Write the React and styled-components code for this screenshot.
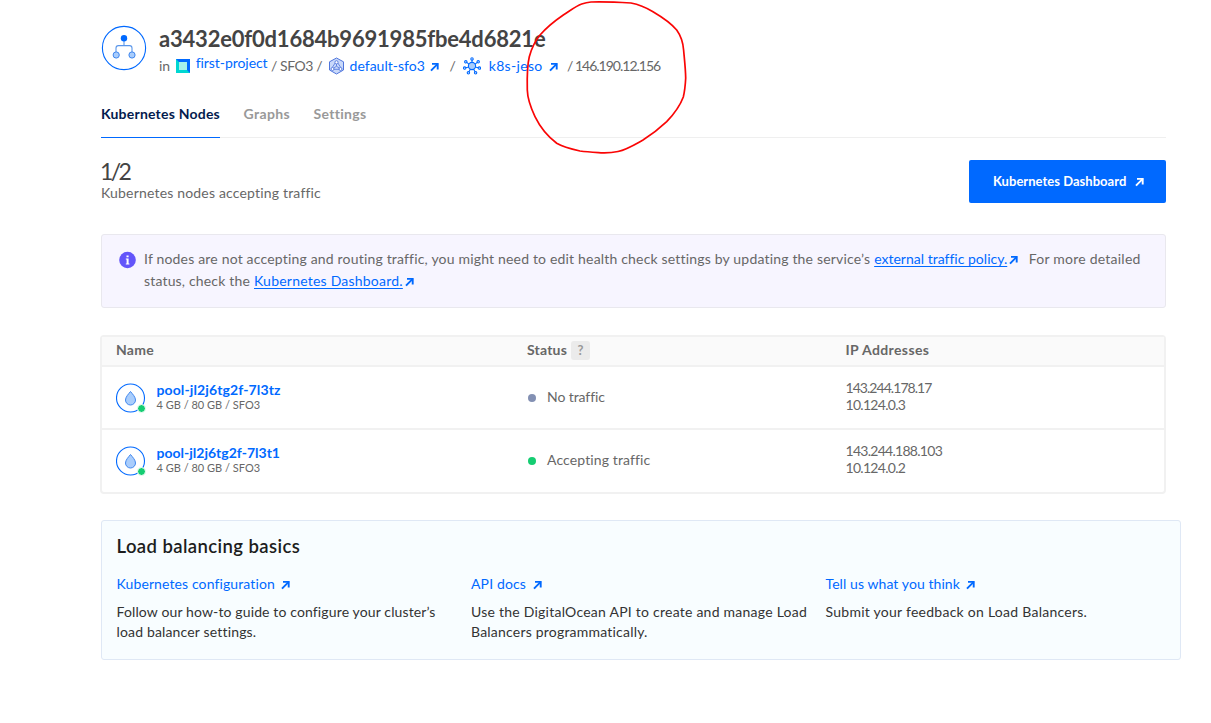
import React from "react";
import styled, { createGlobalStyle } from "styled-components";

const GlobalStyle = createGlobalStyle`
  * { box-sizing: border-box; }
  body {
    margin: 0;
    background: #fff;
    color: #676767;
    font: 400 14px/20px Lato, "Open Sans", sans-serif;
  }
  h1, h2, p { margin: 0; font-weight: inherit; }
  svg { display: block; flex: none; }
`;

const Page = styled.main`
  position: relative;
  width: 1211px;
  height: 723px;
  overflow: hidden;
  padding: 24px 30px 0 101px;
`;

const Content = styled.div`
  width: 1065px;
`;

const T = styled.span`
  letter-spacing: ${(p) => p.$ls || 0}px;
  white-space: nowrap;
`;

const Header = styled.header`
  display: flex;
  height: 68px;
`;

const Avatar = styled.div`
  width: 46px;
  padding: 1px 0 0 0;
  margin-right: 12px;
`;

const Title = styled.h1`
  color: #444;
  font-size: 22px;
  font-weight: 700;
  line-height: 30px;
  letter-spacing: -0.2px;
`;

const Crumbs = styled.div`
  display: flex;
  align-items: center;
  height: 24px;
`;

const CrumbItem = styled.div`
  display: flex;
  align-items: center;
  margin-left: ${(p) => p.$gap || 0}px;
`;

const CrumbLink = styled.a`
  color: #0069ff;
  letter-spacing: ${(p) => p.$ls || 0}px;
  margin: 0 ${(p) => p.$after || 0}px ${(p) => p.$lift || 0}px ${(p) => p.$before || 0}px;
  white-space: nowrap;
`;

const Tabs = styled.nav`
  display: flex;
  height: 46px;
  border-bottom: 1px solid #efefef;
`;

const Tab = styled.a`
  height: 46px;
  width: ${(p) => p.$w}px;
  margin-right: 23.5px;
  padding-top: 12px;
  color: ${(p) => (p.$active ? "#031b4e" : "#999")};
  border-bottom: 1px solid ${(p) => (p.$active ? "#0069ff" : "transparent")};
  font-weight: 700;
  letter-spacing: ${(p) => p.$ls}px;
  white-space: nowrap;
`;

const Summary = styled.section`
  display: flex;
  justify-content: space-between;
  height: 96px;
  padding-top: 22px;
`;

const Count = styled.div`
  margin: -1px 0 0 -1px;
  color: #444;
  font-size: 24px;
  line-height: 24px;
  letter-spacing: -2.7px;
  transform: scaleX(0.96);
  transform-origin: left;
`;

const DashboardButton = styled.a`
  display: flex;
  align-items: center;
  width: 197px;
  height: 43px;
  padding: 0 0 1px 24px;
  gap: 9px;
  border-radius: 2px;
  background: #0069ff;
  color: #fff;
  font-size: 13px;
  font-weight: 700;
`;

const Notice = styled.section`
  display: flex;
  height: 74px;
  padding: 13px 0 0 16.5px;
  border: 1px solid #e9e8ee;
  border-radius: 3px;
  background: #f7f5ff;
`;

const NoticeText = styled.div`
  margin-left: 8.5px;
`;

const NoticeLine = styled.div`
  display: flex;
  align-items: center;
  height: 22px;
`;

const NoticeLink = styled.a`
  margin: 0 ${(p) => p.$after || 2}px 0 4px;
  color: #0069ff;
  letter-spacing: ${(p) => p.$ls}px;
  text-decoration: underline;
  text-underline-offset: 2px;
  white-space: nowrap;
`;

const Table = styled.section`
  width: 1066px;
  height: 159px;
  margin: 27px 0 0 -1px;
  border: 2px solid #f1f1f1;
  border-radius: 4px;
`;

const Row = styled.div`
  display: grid;
  grid-template-columns: 411px 318.5px 1fr;
  align-items: center;
  height: ${(p) => p.$h}px;
  padding-left: 14px;
  border-bottom: ${(p) => (p.$last ? 0 : 2)}px solid #f1f1f1;
`;

const HeadRow = styled(Row)`
  background: #fafafa;
  font-weight: 700;
  padding-bottom: 2px;
`;

const Cell = styled.div`
  display: flex;
  align-items: center;
  margin-top: ${(p) => p.$up || 0}px;
`;

const Help = styled.span`
  width: 19px;
  height: 19px;
  margin: 2px 0 0 4px;
  border-radius: 3px;
  background: #ebebeb;
  color: #999;
  font-size: 13px;
  line-height: 19px;
  text-align: center;
`;

const Droplet = styled.div`
  position: relative;
  width: 30px;
  height: 30px;
  margin-right: 10.5px;
`;

const OnlineDot = styled.span`
  position: absolute;
  right: 0;
  bottom: 0;
  width: 9px;
  height: 9px;
  border: 1px solid #fff;
  border-radius: 50%;
  background: #15cd72;
`;

const NodeInfo = styled.div`
  margin-top: -3px;
`;

const NodeName = styled.a`
  display: block;
  color: #0069ff;
  font-weight: 700;
  line-height: 17px;
  letter-spacing: ${(p) => p.$ls}px;
`;

const NodeSpec = styled.div`
  font-size: 11px;
  line-height: 14px;
`;

const StatusDot = styled.span`
  width: 8px;
  height: 8px;
  margin: 2px 11px 0 1px;
  border-radius: 50%;
  background: ${(p) => p.$color};
`;

const Addresses = styled.div`
  display: flex;
  flex-direction: column;
  line-height: 17px;
  margin-top: -4px;
`;

const Basics = styled.section`
  width: 1080px;
  height: 140px;
  margin-top: 26px;
  padding: 13px 0 0 14.5px;
  border: 1px solid #dfe8f5;
  border-radius: 3px;
  background: #f8fdff;
`;

const BasicsTitle = styled.h2`
  color: #1d1d1d;
  font-size: 18.5px;
  font-weight: 600;
  line-height: 24px;
  letter-spacing: 0.4px;
`;

const BasicsGrid = styled.div`
  display: grid;
  grid-template-columns: 354.5px 354.5px 1fr;
  margin-top: 16px;
`;

const BasicsLink = styled.a`
  display: flex;
  align-items: center;
  gap: 6.5px;
  height: 20px;
  color: #0069ff;
`;

const BasicsText = styled.p`
  display: flex;
  flex-direction: column;
  margin-top: 8px;
  color: #333;
`;

const Marker = styled.svg`
  position: absolute;
  left: 520px;
  top: 0;
`;

const Arrow = ({ color = "#0069ff" }) => (
  <svg width="9" height="11" viewBox="0 0 9 11" fill="none" stroke={color} strokeWidth="1.9">
    <path d="M2 2.900H7.700V8.600" />
    <path d="M7.700 2.900L1 9.600" />
  </svg>
);

const LoadBalancerIcon = () => (
  <svg width="46" height="46" viewBox="0 0 46 46" fill="none" stroke="#0069ff">
    <circle cx="23" cy="23" r="21.6" strokeWidth="1.1" />
    <path d="M23 15V20.6M15 27V23Q15 20.6 17.4 20.6H28.6Q31 20.6 31 23V27" stroke="#5a96ea" strokeWidth="1.1" />
    <circle cx="23" cy="13.3" r="3.2" fill="#0069ff" stroke="none" />
    <circle cx="15.2" cy="30" r="3.1" fill="#a9cdfc" stroke="#3f86ee" />
    <circle cx="31" cy="30" r="3.1" fill="#a9cdfc" stroke="#3f86ee" />
  </svg>
);

const ProjectIcon = () => (
  <svg width="14" height="14" viewBox="0 0 14 14">
    <path d="M0 0H14V14H0Z" fill="#00d7d2" />
    <path d="M0 0H14V14L11 11V3H3Z" fill="#0069ff" />
    <path d="M3 3H11V11H3Z" fill="#a5f0ea" />
  </svg>
);

const ClusterIcon = () => (
  <svg width="17" height="18" viewBox="0 0 17 18" fill="none" stroke="#4f75dc">
    <path d="M8.5 1L15.5 4.8V13L8.5 17L1.5 13V4.8Z" fill="#c9d9fa" strokeWidth="1" strokeLinejoin="round" />
    <path d="M8.5 6.5V9.2L5.3 11.4M8.5 9.2L11.7 11.4M7.3 5.8L4.3 10.4M9.7 5.8L12.7 10.4M6 12.3H11" strokeWidth=".8" />
    <circle cx="8.5" cy="5.3" r="1.6" fill="#fff" strokeWidth=".9" />
    <circle cx="4.5" cy="12" r="1.5" fill="#fff" strokeWidth=".9" />
    <circle cx="12.5" cy="12" r="1.5" fill="#fff" strokeWidth=".9" />
  </svg>
);

const NodesIcon = () => (
  <svg width="18" height="18" viewBox="0 0 18 18" fill="none" stroke="#0069ff" strokeWidth="1.1">
    <path d="M9 6V3M6.3 7.4L3.7 5.4M11.7 7.4L14.3 5.4M6 10L2.7 10.8M12 10L15.3 10.8M7.6 11.7L6 14.7M10.4 11.7L12 14.7" />
    <circle cx="9" cy="9" r="3.6" fill="#a9cdfc" />
    <circle cx="9" cy="1.9" r="1.2" />
    <circle cx="2.8" cy="4.8" r="1.2" />
    <circle cx="15.2" cy="4.8" r="1.2" />
    <circle cx="1.7" cy="11.1" r="1.2" />
    <circle cx="16.3" cy="11.1" r="1.2" />
    <circle cx="5.4" cy="15.8" r="1.2" />
    <circle cx="12.6" cy="15.8" r="1.2" />
  </svg>
);

const InfoIcon = () => (
  <svg width="17" height="24" viewBox="0 0 17 24">
    <circle cx="8.5" cy="12" r="8.3" fill="#6355fa" />
    <path d="M7.500 7.400H9.600V9.200H7.500ZM6.800 10.400H9.600V15.400H10.400V16.500H6.800V15.400H7.600V11.500H6.800Z" fill="#fff" />
  </svg>
);

const DropletIcon = () => (
  <svg width="30" height="30" viewBox="0 0 30 30" fill="none" stroke="#0069ff">
    <circle cx="14.5" cy="15" r="14" strokeWidth="1.1" />
    <path d="M14.5 8.5C16.5 11 19.5 14 19.5 17A5 5 0 0 1 9.5 17C9.500 14 12.500 11 14.500 8.500Z" fill="#a9cdfc" stroke="#3f86ee" />
  </svg>
);

const nodes = [
  { name: "pool-jl2j6tg2f-7l3tz", ls: 0.11, status: "No traffic", statusLs: -0.08, color: "#8390b3", ips: [["143.244.178.17", -0.95], ["10.124.0.3", -0.7]], h: 63 },
  { name: "pool-jl2j6tg2f-7l3t1", ls: 0, status: "Accepting traffic", statusLs: 0.12, color: "#15cd72", ips: [["143.244.188.103", -0.72], ["10.124.0.2", -0.7]], h: 62 },
];

const guides = [
  { title: "Kubernetes configuration", ls: 0.11, lines: [["Follow our how-to guide to configure your cluster’s", 0.13], ["load balancer settings.", 0.16]] },
  { title: "API docs", ls: 0.14, lines: [["Use the DigitalOcean API to create and manage Load", 0.24], ["Balancers programmatically.", 0.21]] },
  { title: "Tell us what you think", ls: 0.08, lines: [["Submit your feedback on Load Balancers.", 0.26]] },
];

export default function App() {
  return (
    <Page>
      <GlobalStyle />
      <Content>
        <Header>
          <Avatar><LoadBalancerIcon /></Avatar>
          <div>
            <Title>a3432e0f0d1684b9691985fbe4d6821e</Title>
            <Crumbs>
              <CrumbItem><T>in</T></CrumbItem>
              <CrumbItem $gap={6}>
                <ProjectIcon />
                <CrumbLink $before={5.5} $lift={6} $ls={-0.06}>first-project</CrumbLink>
              </CrumbItem>
              <CrumbItem $gap={3.5}><T $ls={-0.45}>/ SFO3 /</T></CrumbItem>
              <CrumbItem $gap={5.5}>
                <ClusterIcon />
                <CrumbLink $before={5} $after={5.5} $ls={0.02}>default-sfo3</CrumbLink>
                <Arrow />
              </CrumbItem>
              <CrumbItem $gap={10}><T>/</T></CrumbItem>
              <CrumbItem $gap={7}>
                <NodesIcon />
                <CrumbLink $before={8} $after={6} $ls={0.32}>k8s-jeso</CrumbLink>
                <Arrow />
              </CrumbItem>
              <CrumbItem $gap={9.5}><T $ls={-1}>/ 146.190.12.156</T></CrumbItem>
            </Crumbs>
          </div>
        </Header>
        <Tabs>
          <Tab $active $w={119} $ls={0.22}>Kubernetes Nodes</Tab>
          <Tab $w={46.5} $ls={0.37}>Graphs</Tab>
          <Tab $w={53} $ls={0.3}>Settings</Tab>
        </Tabs>
        <Summary>
          <div>
            <Count>1/2</Count>
            <T $ls={0.18}>Kubernetes nodes accepting traffic</T>
          </div>
          <DashboardButton>
            <T $ls={0.03}>Kubernetes Dashboard</T>
            <Arrow color="#fff" />
          </DashboardButton>
        </Summary>
        <Notice>
          <InfoIcon />
          <NoticeText>
            <NoticeLine>
              <T $ls={0.18}>If nodes are not accepting and routing traffic, you might need to edit health check settings by updating the service’s</T>
              <NoticeLink $ls={0.01}>external traffic policy.</NoticeLink>
              <Arrow />
              <CrumbItem $gap={10.5}><T $ls={0.23}>For more detailed</T></CrumbItem>
            </NoticeLine>
            <NoticeLine>
              <T $ls={0.17}>status, check the</T>
              <NoticeLink $ls={0.22}>Kubernetes Dashboard.</NoticeLink>
              <Arrow />
            </NoticeLine>
          </NoticeText>
        </Notice>
        <Table>
          <HeadRow $h={30}>
            <T $ls={0.27}>Name</T>
            <Cell $up={-1}><T $ls={0.19}>Status</T><Help>?</Help></Cell>
            <T $ls={0.38}>IP Addresses</T>
          </HeadRow>
          {nodes.map((n, i) => (
            <Row key={n.name} $h={n.h} $last={i === 1}>
              <Cell>
                <Droplet><DropletIcon /><OnlineDot /></Droplet>
                <NodeInfo>
                  <NodeName $ls={n.ls}>{n.name}</NodeName>
                  <NodeSpec>4 GB / 80 GB / SFO3</NodeSpec>
                </NodeInfo>
              </Cell>
              <Cell $up={-2}><StatusDot $color={n.color} /><T $ls={n.statusLs}>{n.status}</T></Cell>
              <Addresses>{n.ips.map(([ip, ls]) => <T key={ip} $ls={ls}>{ip}</T>)}</Addresses>
            </Row>
          ))}
        </Table>
        <Basics>
          <BasicsTitle>Load balancing basics</BasicsTitle>
          <BasicsGrid>
            {guides.map((g) => (
              <div key={g.title}>
                <BasicsLink><T $ls={g.ls}>{g.title}</T><Arrow /></BasicsLink>
                <BasicsText>{g.lines.map(([line, ls]) => <T key={line} $ls={ls}>{line}</T>)}</BasicsText>
              </div>
            ))}
          </BasicsGrid>
        </Basics>
      </Content>
      <Marker width="180" height="160" viewBox="520 0 180 160" fill="none">
        <path
          d="M591 2C605 1.600 618 2.200 631 3C639 4.500 646 7.500 653 11.700C662 17 671 23 676.700 30C681 36 683 42 683.600 50C684.500 60 685.500 68 685.700 78C685.300 86 684.500 92 683.300 97C680 106 674 114 666.700 121.700C659 129 651 135 643 140C634 145 627 149.500 618 151.500C611 153 606 153 601 152.800C593 152.300 587 152 580 151C571 149 563 147 556.700 143.300C547 136 540 127 535 116.700C530 106 527.500 98 527.300 90C527 77 527 66 529.300 56.700C532 47 535 41 540 35C547 27 556 20 563.300 15C571 10 576 6 581.700 4C585 2.800 588 2.200 591 2Z"
          stroke="#fa0505"
          strokeWidth="1.7"
        />
      </Marker>
    </Page>
  );
}
